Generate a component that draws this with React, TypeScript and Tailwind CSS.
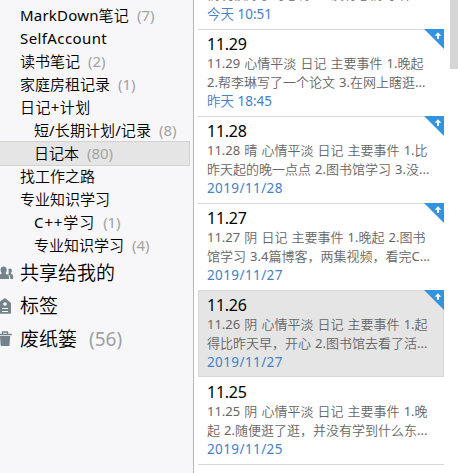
const FONT = "font-['Noto_Sans','Noto_Sans_CJK_SC_DemiLight','Noto_Sans_CJK_SC_Light','Noto_Sans_CJK_SC',sans-serif]";

type Folder = { name: string; count?: number; nested?: boolean; selected?: boolean; tracking?: string };

const folders: Folder[] = [
  { name: 'MarkDown笔记', count: 7, tracking: 'tracking-[0.2px]' },
  { name: 'SelfAccount', tracking: 'tracking-[0.4px]' },
  { name: '读书笔记', count: 2 },
  { name: '家庭房租记录', count: 1 },
  { name: '日记+计划', tracking: 'tracking-[0.4px]' },
  { name: '短/长期计划/记录', count: 8, nested: true, tracking: 'tracking-[0.1px]' },
  { name: '日记本', count: 80, nested: true, selected: true },
  { name: '找工作之路' },
  { name: '专业知识学习' },
  { name: 'C++学习', count: 1, nested: true, tracking: 'tracking-[0.9px]' },
  { name: '专业知识学习', count: 4, nested: true },
];

type Note = { title: string; lines: string[]; date: string; selected?: boolean; pinned?: boolean; afterSelected?: boolean };

const notes: Note[] = [
  { title: '11.29', lines: ['11.29 心情平淡 日记 主要事件 1.晚起', '2.帮李琳写了一个论文 3.在网上瞎逛...'], date: '昨天 18:45', pinned: true },
  { title: '11.28', lines: ['11.28 晴 心情平淡 日记 主要事件 1.比', '昨天起的晚一点点 2.图书馆学习 3.没...'], date: '2019/11/28', pinned: true },
  { title: '11.27', lines: ['11.27 阴 日记 主要事件 1.晚起 2.图书', '馆学习 3.4篇博客，两集视频，看完C...'], date: '2019/11/27', pinned: true },
  { title: '11.26', lines: ['11.26 阴 心情平淡 日记 主要事件 1.起', '得比昨天早，开心 2.图书馆去看了活...'], date: '2019/11/27', selected: true, pinned: true },
  { title: '11.25', lines: ['11.25 阴 心情平淡 日记 主要事件 1.晚', '起 2.随便逛了逛，并没有学到什么东...'], date: '2019/11/25', afterSelected: true },
];

function PeopleIcon() {
  return (
    <svg className="-mt-px" width="14" height="14" viewBox="0 0 14 14" fill="#74828a">
      <path d="M8.300 3.200c.4-.6 1-.8 1.500-.8 1.300 0 2.100.9 2.100 2.200 0 1-.3 1.700-.9 2.200v1l1.300.8c.5.300.8.700.8 1.300V13h-2.800v-1.800c0-1-.6-1.700-1.400-2.100l-.9-.5c.5-.7.8-1.500.8-2.600z" />
      <path d="M-3 13v-2c0-1 .5-1.500 1.300-1.800L1.500 7.800V6.700C.8 6 .5 5.200.5 3.800.5 2 1.700.500 3.600.500S6.700 2 6.700 3.800c0 1.400-.3 2.200-1 2.900v1.100l2.200.9c.8.400 1.200 1 1.200 1.900V13z" />
    </svg>
  );
}

function TagIcon() {
  return (
    <svg className="-mt-px" width="14" height="16" viewBox="0 0 14 16">
      <path d="M-2 5 4.200.500a1.200 1.200 0 0 1 1.500 0L11 5v9.500a1.200 1.200 0 0 1-1.200 1.200H-2z" fill="#74828a" />
      <circle cx="5" cy="6" r="1.800" fill="#f7f7fa" />
      <path d="M2 10.500h6M2 13.500h6" stroke="#f7f7fa" strokeWidth="1" />
    </svg>
  );
}

function TrashIcon() {
  return (
    <svg className="-mt-px" width="14" height="16" viewBox="0 0 14 16">
      <path d="M2.500 3V1h5v2M-2 3.500h13.800" fill="none" stroke="#74828a" strokeWidth="1.300" />
      <path d="M0 5h10.200l-.7 9.200a1 1 0 0 1-1 .9H1.700a1 1 0 0 1-1-.9z" fill="#74828a" />
    </svg>
  );
}

const sections = [
  { name: '共享给我的', icon: <PeopleIcon /> },
  { name: '标签', icon: <TagIcon /> },
  { name: '废纸篓', icon: <TrashIcon />, count: 56 },
];

function FolderRow({ name, count, nested, selected, tracking = '' }: Folder) {
  return (
    <div className={`flex items-center ${selected ? '-my-px h-[25px] border border-l-0 border-[#d2d2d2] bg-[#e5e5e5]' : 'h-[23px]'} ${nested ? 'pl-[34px]' : 'pl-5'}`}>
      <span className={`text-black ${tracking}`}>{name}</span>
      {count !== undefined && <span className="ml-2 tracking-[-0.1px] text-[#a3a3a3]">({count})</span>}
    </div>
  );
}

function PinBadge() {
  return (
    <svg className="absolute -top-px right-0" width="20" height="20" viewBox="0 0 20 20">
      <path d="M0 0h20v20z" fill="#3294e0" />
      <path d="M14 3.300 17.300 6.700H15V10h-2V6.700h-2.300z" fill="#fff" />
    </svg>
  );
}

function DateLabel({ date }: { date: string }) {
  return (
    <p className={`h-[19px] text-[13.500px] leading-[19px] text-[#4580c8] ${date.includes('/') ? 'tracking-[0.4px]' : ''}`}>{date}</p>
  );
}

function NoteCard({ title, lines, date, selected, pinned, afterSelected }: Note) {
  return (
    <article className={`relative h-[87px] shrink-0 ${selected ? 'border border-[#d2d2d2] bg-[#e5e5e5] pl-2' : 'border-t pl-[9px]'} ${afterSelected ? 'border-transparent' : 'border-[#d5d9d9]'}`}>
      <div className="pt-[4px] whitespace-nowrap">
        <h2 className="h-[20px] text-[16px] leading-[20px] tracking-[-0.25px] text-black">{title}</h2>
        {lines.map((line) => (
          <p key={line} className="h-[19px] text-[13px] leading-[19px] [word-spacing:0.7px] text-[#666]">{line}</p>
        ))}
        <DateLabel date={date} />
      </div>
      {pinned && <div className={selected ? 'absolute top-0 -right-px' : 'absolute top-0 right-0'}><PinBadge /></div>}
    </article>
  );
}

export default function App() {
  return (
    <div className={`flex h-[473px] w-[458px] overflow-hidden bg-white ${FONT}`}>
      <aside className="w-[194px] shrink-0 border-r border-[#b8b8b8] bg-[#f7f7fa] pr-[3px] pt-[4px] whitespace-nowrap">
        <nav className="text-[15px] leading-[23px]">
          {folders.map((f, i) => <FolderRow key={i} {...f} />)}
        </nav>
        <div className="text-[19px] leading-[33px]">
          {sections.map((s) => (
            <div key={s.name} className="flex h-[33px] items-center">
              <span className="flex w-5 items-center">{s.icon}</span>
              <span className="text-black">{s.name}</span>
              {s.count && <span className="ml-[12px] text-[#a0a0a0]">({s.count})</span>}
            </div>
          ))}
        </div>
      </aside>
      <main className="ml-1 flex w-[246px] flex-col">
        <div className="flex h-[29px] shrink-0 flex-col justify-end overflow-hidden pb-[5px] pl-[9px] whitespace-nowrap">
          <p className="-mt-px mb-px text-[13px] leading-[19px] text-[#666]">情况很好学习心得 一 没有心情 事件</p>
          <DateLabel date="今天 10:51" />
        </div>
        {notes.map((n) => <NoteCard key={n.title} {...n} />)}
        <div className="h-px shrink-0 bg-[#d5d9d9]" />
      </main>
      <div className="ml-auto h-[69px] w-2 bg-[#d5d5d5]" />
    </div>
  );
}
